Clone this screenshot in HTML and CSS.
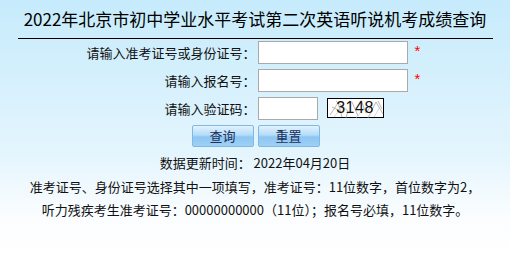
FILE: index.html
```html
<!DOCTYPE html>
<html lang="zh-CN">

<head>
    <meta charset="UTF-8">
    <title>2022年北京市初中学业水平考试第二次英语听说机考成绩查询</title>
    <link rel="stylesheet" href="styles.css">
</head>

<body>
    <div class="wrap">
        <h1 class="title">2022年北京市初中学业水平考试第二次英语听说机考成绩查询</h1>

        <form class="query" action="#" method="post">
            <label class="label" for="zkzh">请输入准考证号或身份证号：</label>
            <div class="field">
                <input type="text" id="zkzh" class="txt">
                <span class="req">*</span>
            </div>

            <label class="label" for="bmh">请输入报名号：</label>
            <div class="field">
                <input type="text" id="bmh" class="txt">
                <span class="req">*</span>
            </div>

            <label class="label" for="yzm">请输入验证码：</label>
            <div class="field">
                <input type="text" id="yzm" class="txt short">
                <div class="captcha">
                    <svg class="noise" width="57" height="20" viewBox="0 0 57 20">
                        <path d="M2 16 L10 4 L14 18 M8 2 L20 12 L18 19 M24 3 L30 17 M33 1 L38 14 L44 6 M40 19 L48 3 L55 15 M50 2 L54 10 M4 8 L12 12" stroke="#999" stroke-width="0.7" fill="none"/>
                        <path d="M6 18 L16 6 M28 19 L36 9 M46 18 L52 8" stroke="#bbb" stroke-width="0.6" fill="none"/>
                    </svg>
                    <span class="code">3148</span>
                </div>
            </div>

            <div class="label"></div>
            <div class="field btns">
                <button type="button" class="btn">查询</button>
                <button type="reset" class="btn">重置</button>
            </div>
        </form>

        <p class="update">数据更新时间： 2022年04月20日</p>

        <div class="notes">
            <p>准考证号、身份证号选择其中一项填写，准考证号：11位数字，首位数字为2，</p>
            <p>听力残疾考生准考证号：00000000000（11位）；报名号必填，11位数字。</p>
        </div>
    </div>
</body>

</html>
```

FILE: styles.css
```css
html, body {
    margin: 0;
    height: 100%;
}

body {
    background: linear-gradient(to bottom, #c6ebfc 0%, #e4f5fd 60%, #fbfdff 85%, #ffffff 100%);
    font-family: "Noto Sans CJK SC", "Liberation Sans", sans-serif;
    font-size: 13px;
    color: #111;
}

.wrap {
    width: 475px;
    margin: 0 auto;
}

.title {
    margin: 0;
    padding: 6px 0 6px;
    font-size: 17px;
    font-weight: normal;
    line-height: 26px;
    text-align: center;
    color: #000;
    border-bottom: 1px solid #000;
}

.query {
    display: grid;
    grid-template-columns: 240px 1fr;
    row-gap: 5px;
    margin-top: 2px;
}

.label {
    display: flex;
    align-items: center;
    justify-content: flex-end;
    padding-right: 2px;
    line-height: 18px;
}

.field {
    display: flex;
    align-items: center;
}

.txt {
    width: 150px;
    height: 23px;
    box-sizing: border-box;
    margin: 0;
    border: 1px solid #a9a9a9;
    background: #fff;
    padding: 0 3px;
}

.txt.short {
    width: 60px;
}

.req {
    color: #f00;
    margin-left: 7px;
    margin-top: -4px;
    font-family: "Liberation Sans", sans-serif;
    font-size: 15px;
    line-height: 15px;
}

.captcha {
    position: relative;
    width: 57px;
    height: 20px;
    margin-left: 9px;
    margin-top: -2px;
    box-sizing: border-box;
    border: 1px solid #000;
    background: #fff;
    display: flex;
    align-items: center;
    justify-content: center;
}

.noise {
    position: absolute;
    left: 0;
    top: 0;
}

.code {
    position: relative;
    font-family: "Liberation Sans", sans-serif;
    font-size: 16px;
    line-height: 18px;
    color: #111;
    letter-spacing: 0.5px;
}

.btns {
    gap: 4px;
    margin-left: -66px;
}

.btn {
    width: 62px;
    height: 22px;
    margin: 0;
    padding: 0;
    border: 1px solid #7fb8e6;
    border-radius: 2px;
    background: linear-gradient(to bottom, #e3f2fd 0%, #b5dcf8 45%, #8cc6f2 55%, #9fd0f5 100%);
    font-family: "Noto Sans CJK SC", sans-serif;
    font-size: 13px;
    line-height: 20px;
    color: #1d2f5a;
}

.update {
    margin: 5px 0 0;
    text-align: center;
    line-height: 22px;
}

.notes {
    margin-top: 1px;
    text-align: center;
}

.notes p {
    margin: 0;
    line-height: 23px;
}
```
